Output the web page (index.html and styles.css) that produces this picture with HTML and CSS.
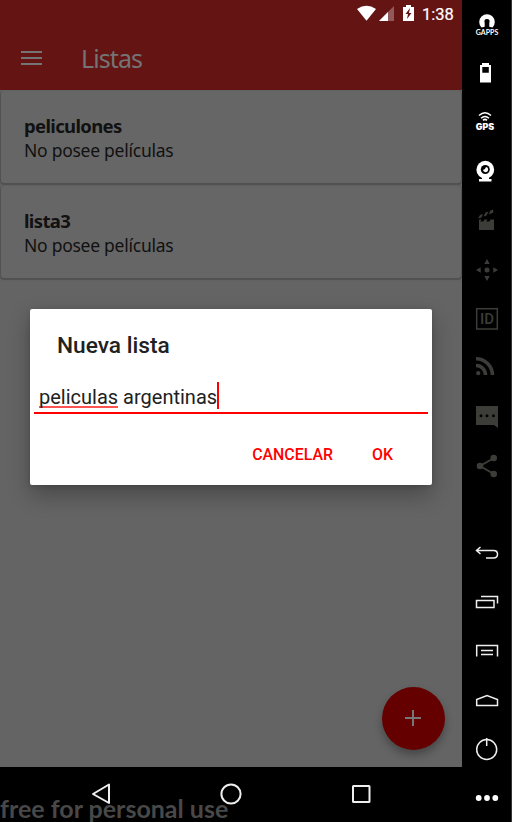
FILE: index.html
```html
<!DOCTYPE html>
<html lang="es">
<head>
<meta charset="utf-8">
<title>Listas</title>
<link rel="stylesheet" href="styles.css">
</head>
<body>
<div class="emulator">
  <main class="phone">
    <header class="header">
      <div class="status">
        <svg class="status-icons" width="60" height="20" viewBox="0 0 60 20">
          <path d="M0 5Q9.500-1.500 19 5L9.500 17Z" transform="translate(0 4)scale(1 .98)" fill="#fff"/>
          <path d="M37 6v15H22Z" fill="#92595a"/>
          <path d="M31 12v9H22Z" fill="#fff"/>
          <path d="M46 7h3V5h5v2h3v14H46Z" fill="#fff"/>
          <path d="M53 8l-4.500 6h2.500l-1 5 4.500-6H52Z" fill="#651414"/>
        </svg>
        <span class="clock">1:38</span>
      </div>
      <div class="toolbar">
        <div class="hamburger"><i></i><i></i><i></i></div>
        <h1>Listas</h1>
      </div>
    </header>
    <section class="content">
      <article class="card"><h2>peliculones</h2><p>No posee películas</p></article>
      <article class="card"><h2>lista3</h2><p>No posee películas</p></article>
      <button class="fab" aria-label="Agregar"><svg width="17" height="17" viewBox="0 0 17 17"><path d="M8 0v16M0 8h16" stroke="#777" stroke-width="2"/></svg></button>
    </section>
    <nav class="nav">
      <span class="watermark">free for personal use</span>
      <svg width="462" height="55" viewBox="0 0 462 55" fill="none" stroke="#eee" stroke-width="2">
        <path d="M109 17.500v18.500L93 27Z" stroke-linejoin="round"/>
        <circle cx="231" cy="27" r="9.600"/>
        <rect x="353" y="19" width="16.500" height="16" rx=".5"/>
      </svg>
    </nav>
    <div class="dialog">
      <h3>Nueva lista</h3>
      <div class="field"><span class="misspelled">peliculas</span><span class="rest">&nbsp;argentinas</span><i class="caret"></i></div>
      <div class="actions"><span class="cancel">CANCELAR</span><span class="ok">OK</span></div>
    </div>
  </main>
  <aside class="sidebar">
    <div class="group bright">
      <svg viewBox="0 0 49 49"><path d="M19.500 27.500a7.800 7.800 0 1 1 11 0l-3.200-.8v-3.500q1.200-4.200-2.300-4.200t-2.300 4.200v3.500Z"/><text class="gapps" x="13.800" y="34.500" textLength="22.500" lengthAdjust="spacingAndGlyphs">GAPPS</text></svg>
      <svg viewBox="0 0 49 49"><path fill-rule="evenodd" d="M18 16h2v-2h7v2h2v17.500H18ZM20.300 18v5.700h6.500V18Z"/></svg>
      <svg viewBox="0 0 49 49"><path class="line" d="M17 17.500q6-5.500 12 0M19 20.200q4-3.500 8 0M21 22.400q2-2 4 0"/><text class="gps" x="13.800" y="31.500" textLength="18.500" lengthAdjust="spacingAndGlyphs">GPS</text></svg>
      <svg viewBox="0 0 49 49"><circle cx="23.300" cy="22.700" r="8.900"/><path d="M20 30h7v2h2.500v2.500H17V32h3Z"/><circle cx="23.300" cy="22.500" r="4.500" fill="#000"/><path d="M24 20a2.600 2.600 0 1 1-3 3q2 0 3-3Z"/></svg>
    </div>
    <div class="group dim">
      <svg viewBox="0 0 49 49"><path d="M17 25.500h15V34H17ZM17 26v-2.500h2.500l-1.500 2.500ZM21 26l1.500-2.500h3l-1.500 2.500ZM27 26l1.500-2.500h3.500v2.500Z"/><path d="M16 22.500l2-3.500 3-1-1.500 3.500ZM21.500 20.500l2-4 3-1-2 4ZM26.500 18.500l2-4 2.500-1 .5 3Z"/></svg>
      <svg viewBox="0 0 49 49"><circle cx="25" cy="25" r="2.500"/><path d="M25 14l2.700 5h-5.400ZM25 36l2.700-5h-5.400ZM14 25l4.700-2.700v5.400ZM36 25l-4.700-2.700v5.400Z"/></svg>
      <svg viewBox="0 0 49 49"><rect x="14.700" y="14.700" width="20.600" height="20.300" class="box"/><text class="id" x="18" y="30" textLength="14" lengthAdjust="spacingAndGlyphs">ID</text></svg>
      <svg viewBox="0 0 49 49"><circle cx="16.200" cy="30.200" r="2.100"/><path d="M14 22.500a9.500 9.500 0 0 1 9.500 9.500M14 15.700a16.500 16.500 0 0 1 16.500 16.300" fill="none" stroke="#3c3c38" stroke-width="3.600"/></svg>
      <svg viewBox="0 0 49 49"><path d="M14 14h22v22l-4-3H14Z"/><g fill="#000"><circle cx="19" cy="23.700" r="1.500"/><circle cx="25" cy="23.700" r="1.500"/><circle cx="31.500" cy="23.700" r="1.500"/></g></svg>
      <svg viewBox="0 0 49 49"><path d="M32 17L18 25l14 8" fill="none" stroke="#3c3c38" stroke-width="2"/><circle cx="31.700" cy="17" r="3.300"/><circle cx="18" cy="25" r="3.300"/><circle cx="31.700" cy="33" r="3.300"/></svg>
    </div>
    <div class="group outline">
      <svg viewBox="0 0 49 49"><path d="M18.500 19l-4 3.500 4 3.500M15 22.500h16.500q4 0 4 3.700t-4 3.800H24"/></svg>
      <svg viewBox="0 0 49 49"><path d="M14.500 23.500h17.500v7H14.500ZM19 19.500h16.500v7"/></svg>
      <svg viewBox="0 0 49 49"><path d="M14.700 30.500V19.500h20.800v11M19 24.500h12M19 28.500h12"/></svg>
      <svg viewBox="0 0 49 49"><path d="M14.700 30.500v-6L25 20.500l10.500 4v6Z"/></svg>
      <svg viewBox="0 0 49 49"><circle cx="24.700" cy="25.500" r="10"/><path d="M24.700 14v8"/></svg>
      <svg viewBox="0 0 49 49"><g fill="#fff" stroke="none"><circle cx="16.700" cy="25" r="2.900"/><circle cx="25" cy="25" r="2.900"/><circle cx="33.300" cy="25" r="2.900"/></g></svg>
    </div>
  </aside>
</div>
</body>
</html>
```
FILE: styles.css
```css
* { box-sizing: border-box; }
body { margin: 0; background: #000; font-family: Roboto, sans-serif; }
h1, h2, h3, p { margin: 0; white-space: nowrap; }
.emulator { display: flex; width: 512px; height: 822px; overflow: hidden; }
.phone { position: relative; width: 462px; display: flex; flex-direction: column; }

.header { height: 90px; background: #651414; }
.status { height: 28px; display: flex; padding-left: 357px; color: #fff; }
.status-icons { width: 60px; height: 20px; overflow: visible; }
.clock { margin-left: 5px; font-size: 16.500px; font-weight: 400; line-height: 29px; -webkit-text-stroke: .2px #fff; }
.toolbar { height: 62px; display: flex; align-items: center; padding-left: 21px; }
.hamburger { width: 21px; display: grid; gap: 4px; margin-top: -2px; }
.hamburger i { height: 2px; background: #747474; }
.toolbar h1 { margin: -2px 0 0 39px; font: 400 25px/30px "Noto Sans", sans-serif; letter-spacing: -.9px; color: #747474; }

.content { position: relative; height: 677px; padding: 1px 1px 0; background: #646464; }
.card { height: 92px; margin-bottom: 3px; padding: 22px 23px 0; background: #666; border-radius: 3px; box-shadow: 0 1px 1px 1px #505050; color: #111; }
.card h2 { font: 700 18.500px/26px "Noto Sans", sans-serif; letter-spacing: -.65px; }
.card p { font: 400 17.500px/22px "Noto Sans", sans-serif; letter-spacing: -.26px; }
.fab { position: absolute; right: 17px; bottom: 17px; width: 63px; height: 63px; padding: 0; border: 0; border-radius: 50%; background: #650000; display: grid; place-items: center; box-shadow: 0 5px 9px rgba(0,0,0,.3); }

.nav { position: relative; height: 55px; background: #000; }
.nav svg { position: relative; display: block; }
.watermark { position: absolute; left: 0; top: 26px; font: 700 25px/30px Lato, sans-serif; color: #484848; white-space: nowrap; }

.dialog { position: absolute; left: 30px; top: 309px; width: 402px; height: 176px; padding: 21px 4px 0; background: #fff; border-radius: 2px; box-shadow: 0 10px 22px rgba(0,0,0,.28), 0 1px 5px rgba(0,0,0,.15); color: #212121; }
.dialog h3 { margin-left: 23px; padding-top: 1px; font-size: 22.700px; font-weight: 500; line-height: 30px; }
.field { height: 33px; margin-top: 20px; padding: 1px 0 0 5px; border-bottom: 2px solid #f00; display: flex; font-size: 20px; line-height: 31px; white-space: nowrap; }
.misspelled { height: 26px; border-bottom: 2px solid #ff5252; }
.caret { width: 2px; height: 27px; background: #f00; }
.actions { display: flex; justify-content: flex-end; gap: 39px; padding: 29px 35px 0 0; font-size: 15.900px; font-weight: 500; line-height: 24px; color: #f00; }

.sidebar { width: 50px; display: flex; flex-direction: column; background: #000; border-right: 1px solid #263c3c; }
.group { display: grid; grid-auto-rows: 49px; }
.group svg { display: block; width: 49px; height: 49px; }
.bright { fill: #fff; }
.dim { fill: #3c3c38; }
.outline { margin-top: auto; fill: none; stroke: #eee; stroke-width: 1.500; }
.line { fill: none; stroke: #fff; stroke-width: 1.500; }
.box { fill: none; stroke: #3c3c38; stroke-width: 1.500; }
.gapps { font: 700 7px Lato, sans-serif; }
.gps { font: 900 8.500px Inter, sans-serif; }
.id { font: 500 14px Roboto, sans-serif; }
```
